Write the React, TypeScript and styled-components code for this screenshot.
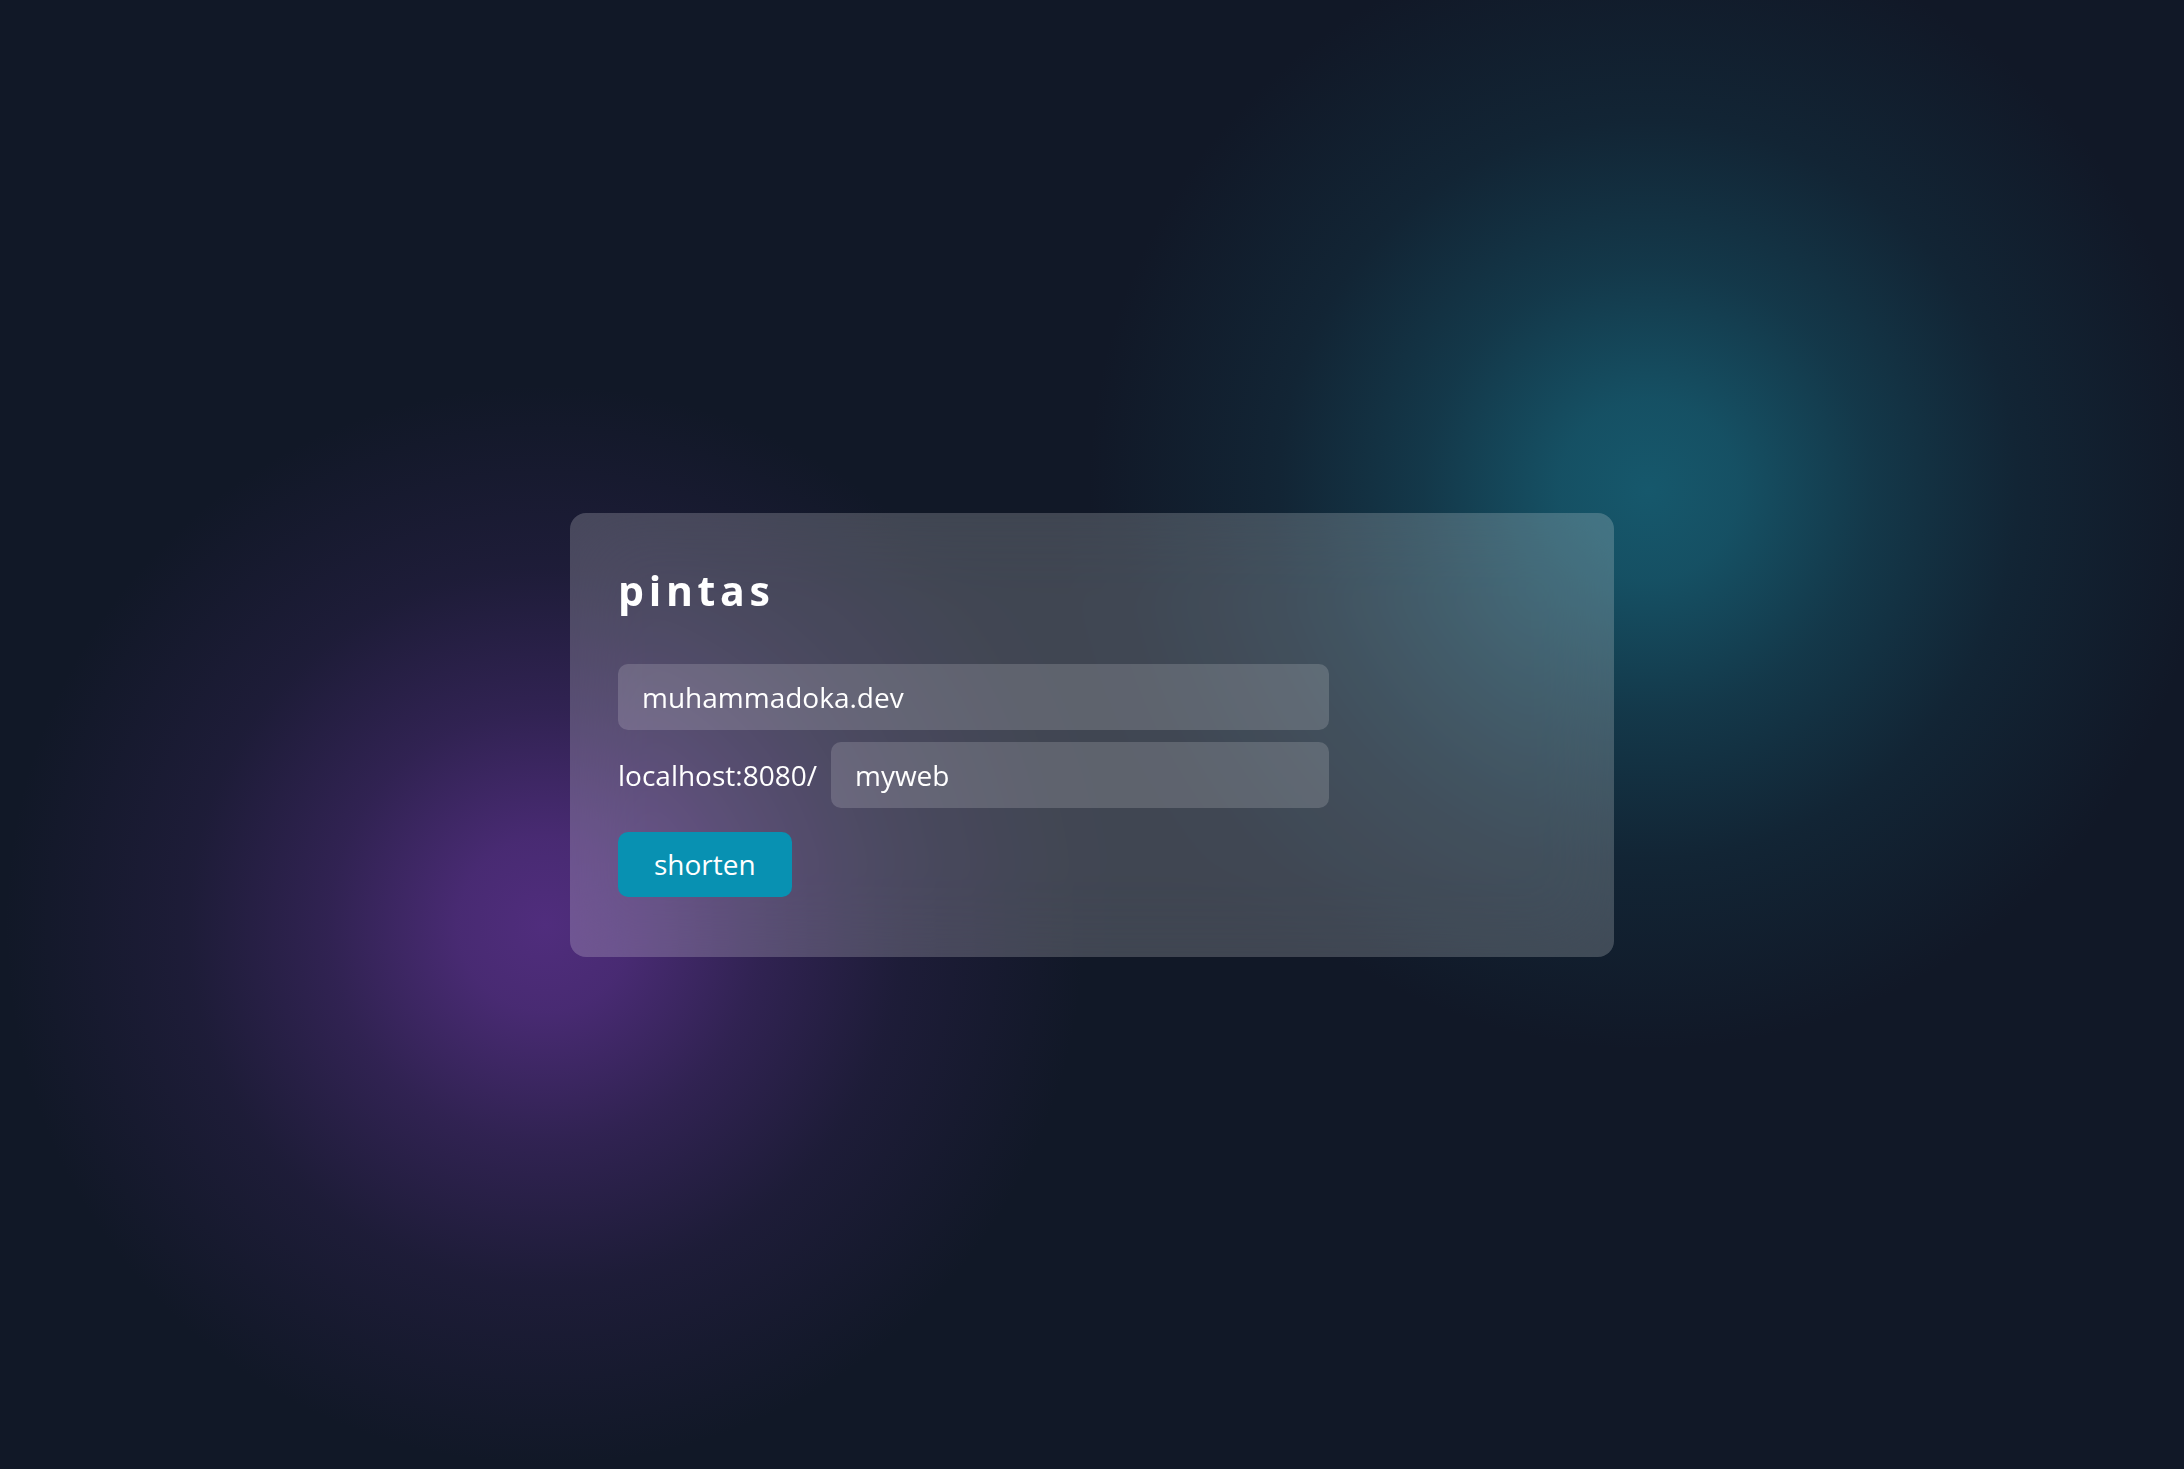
import React from "react";
import styled, { createGlobalStyle } from "styled-components";

const GlobalStyle = createGlobalStyle`
  html, body {
    margin: 0;
    padding: 0;
  }
  body {
    background: #111827;
    font-family: "Open Sans", "Noto Sans", sans-serif;
    color: #ffffff;
  }
  * { box-sizing: border-box; }
`;

const Page = styled.main`
  min-height: 100vh;
  display: flex;
  align-items: center;
  justify-content: center;
  background:
    radial-gradient(circle 540px at 545px 925px,
      rgba(80, 45, 125, 1) 0%,
      rgba(80, 45, 125, 0.88) 16%,
      rgba(80, 45, 125, 0.5) 40%,
      rgba(80, 45, 125, 0.2) 66%,
      rgba(80, 45, 125, 0) 100%),
    radial-gradient(circle 560px at 1648px 490px,
      rgba(22, 88, 108, 1) 0%,
      rgba(22, 88, 108, 0.88) 16%,
      rgba(22, 88, 108, 0.5) 40%,
      rgba(22, 88, 108, 0.2) 66%,
      rgba(22, 88, 108, 0) 100%),
    #111827;
`;

const Card = styled.section`
  width: 1044px;
  padding: 46px 48px 60px;
  border-radius: 16px;
  background: rgba(255, 255, 255, 0.2);
  backdrop-filter: blur(40px);
  -webkit-backdrop-filter: blur(40px);
`;

const Title = styled.h1`
  margin: 0 0 43px;
  font-size: 41px;
  line-height: 62px;
  font-weight: 700;
  letter-spacing: 0.115em;
  color: #ffffff;
`;

const Form = styled.form`
  display: flex;
  flex-direction: column;
  align-items: flex-start;
  gap: 12px;
  max-width: 711px;
`;

const Field = styled.input`
  width: 100%;
  height: 66px;
  border: none;
  outline: none;
  border-radius: 10px;
  padding: 0 24px;
  background: rgba(255, 255, 255, 0.16);
  color: #ffffff;
  font-family: inherit;
  font-size: 28px;
`;

const Row = styled.div`
  display: flex;
  align-items: center;
  gap: 14px;
  width: 100%;
`;

const Prefix = styled.span`
  font-size: 28px;
  color: #ffffff;
  white-space: nowrap;
`;

const Button = styled.button`
  margin-top: 12px;
  height: 65px;
  padding: 0 36px;
  border: none;
  border-radius: 10px;
  background: #0891b2;
  color: #ffffff;
  font-family: inherit;
  font-size: 28px;
  cursor: pointer;
`;

export default function App() {
  return (
    <>
      <GlobalStyle />
      <Page>
        <Card>
          <Title>pintas</Title>
          <Form onSubmit={(e) => e.preventDefault()}>
            <Field defaultValue="muhammadoka.dev" />
            <Row>
              <Prefix>localhost:8080/</Prefix>
              <Field defaultValue="myweb" />
            </Row>
            <Button type="submit">shorten</Button>
          </Form>
        </Card>
      </Page>
    </>
  );
}
